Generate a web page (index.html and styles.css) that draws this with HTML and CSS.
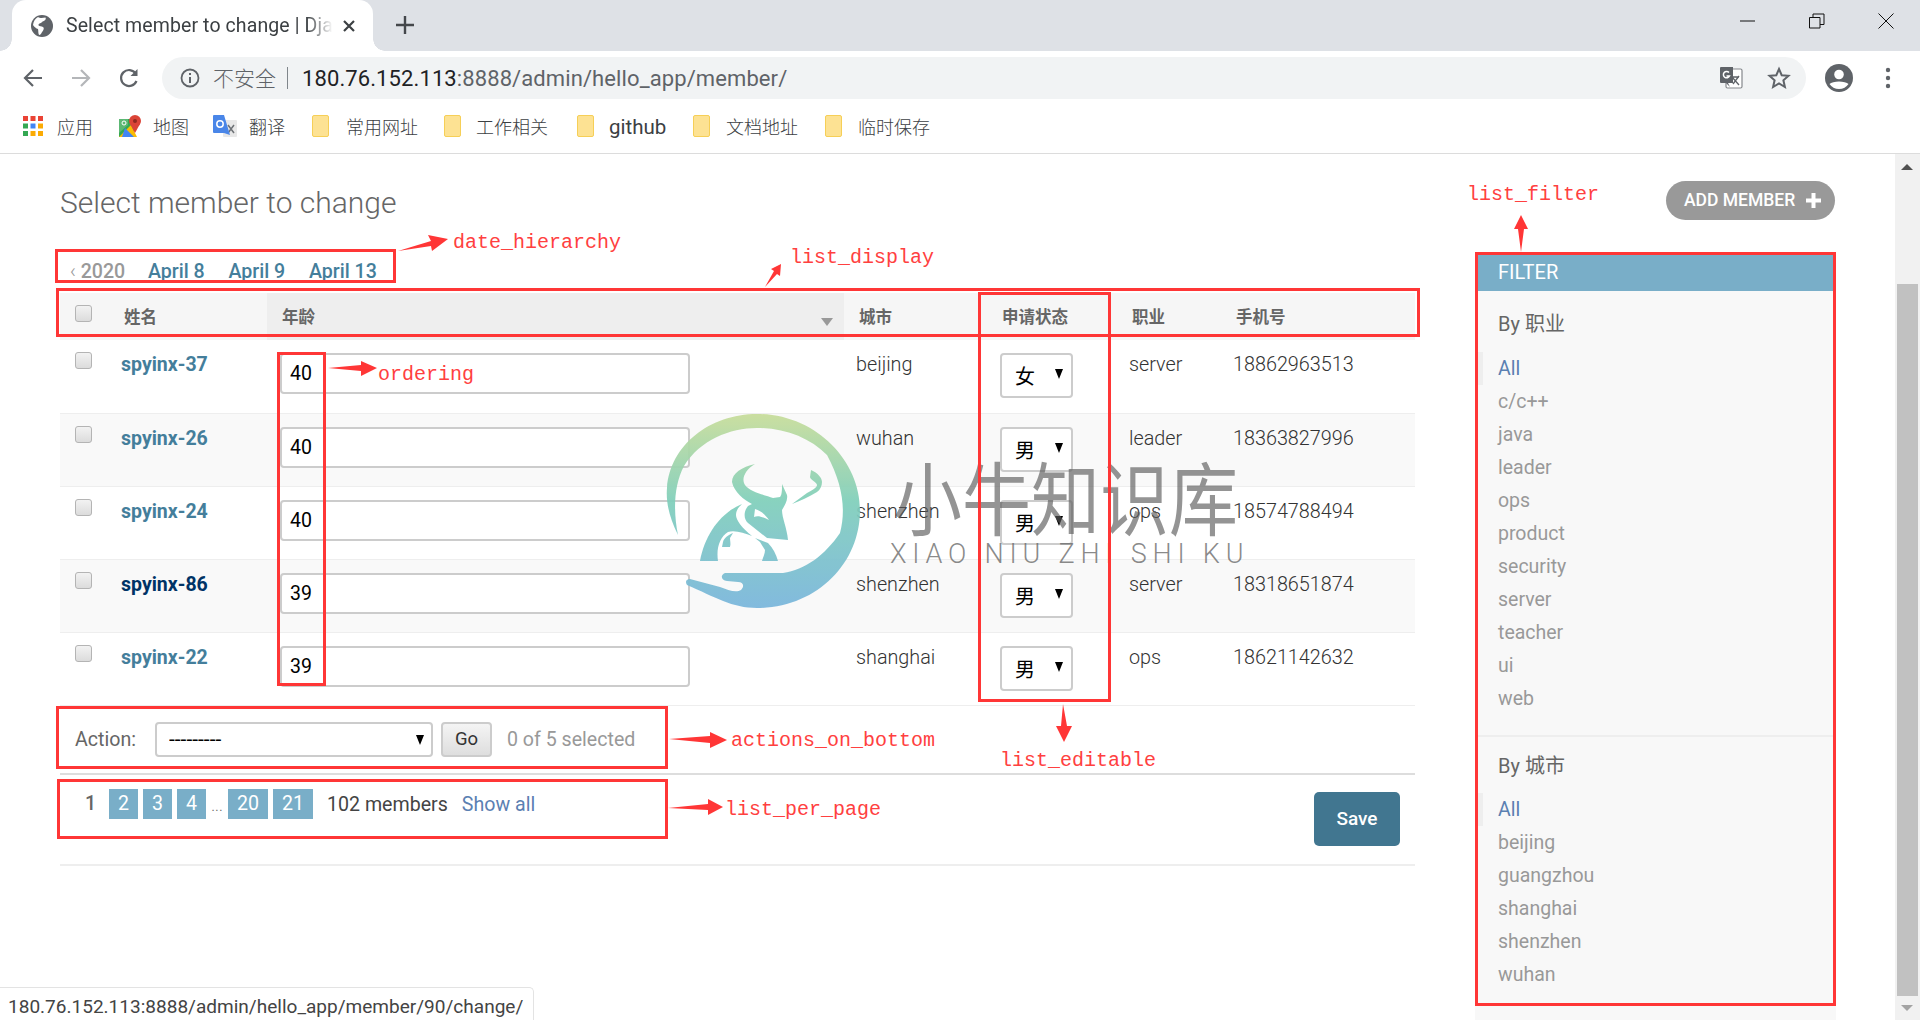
FILE: index.html
```html
<!DOCTYPE html>
<html lang="en">
<head>
<meta charset="utf-8">
<title>Select member to change</title>
<link rel="stylesheet" href="styles.css">
</head>
<body>
<header class="chrome">
  <div class="tabstrip">
    <div class="tab">
      <svg class="tab-icon" width="24" height="24" viewBox="0 0 24 24"><circle cx="12" cy="12" r="11" fill="#5f6368"/><path d="M8 3c2 1.500 5 1 7.500.5 1 2-1 3.500-3 4-1 2-4 1.500-4 3.500 0 1.500 3 1 4.500 2 1.500 1 .5 3.500-1 5-.5 1.500-1.500 3-3 3-1-2-.5-4-1-6-2-.5-3.500-2-5-4 .5-3.500 2-6.500 5-8z" fill="#fff"/></svg>
      <span class="tab-title">Select member to change | Dja</span>
      <svg class="tab-close" width="14" height="14" viewBox="0 0 14 14"><path d="M2 2l10 10M12 2L2 12" stroke="#3c4043" stroke-width="2.200"/></svg>
    </div>
    <svg class="new-tab" width="20" height="20" viewBox="0 0 20 20"><path d="M10 1v18M1 10h18" stroke="#44474b" stroke-width="2.400"/></svg>
    <div class="window-controls">
      <svg width="16" height="16" viewBox="0 0 16 16"><path d="M0 8h15" stroke="#111" stroke-width="1"/></svg>
      <svg width="16" height="16" viewBox="0 0 16 16"><path d="M.5 4.500h10.500v10.500H.5zM4 4.500V1h11v10.500h-4" fill="none" stroke="#111"/></svg>
      <svg width="16" height="16" viewBox="0 0 16 16"><path d="M.5.500l15 15M15.500.500l-15 15" stroke="#111"/></svg>
    </div>
  </div>
  <div class="toolbar">
    <svg class="nav-icon" width="22" height="22" viewBox="0 0 22 22"><path d="M20 11H4M11 3l-8 8 8 8" fill="none" stroke="#5f6368" stroke-width="2.200"/></svg>
    <svg class="nav-icon" width="22" height="22" viewBox="0 0 22 22"><path d="M2 11h16M11 3l8 8-8 8" fill="none" stroke="#b4b6b9" stroke-width="2.200"/></svg>
    <svg class="nav-icon" width="22" height="22" viewBox="0 0 22 22"><path d="M18.500 14a8 8 0 1 1-.8-7.500" fill="none" stroke="#5f6368" stroke-width="2.200"/><path d="M19.500 2v7h-7z" fill="#5f6368"/></svg>
    <div class="omnibox">
      <svg class="info-icon" width="20" height="20" viewBox="0 0 20 20"><circle cx="10" cy="10" r="8.500" fill="none" stroke="#5f6368" stroke-width="1.800"/><path d="M10 9v6M10 5v2" stroke="#5f6368" stroke-width="2"/></svg>
      <span class="insecure">不安全</span>
      <span class="omni-sep"></span>
      <span class="url"><span class="url-host">180.76.152.113</span>:8888/admin/hello_app/member/</span>
      <svg class="translate-icon" width="24" height="24" viewBox="0 0 24 24"><rect x="7" y="3" width="16" height="19" rx="1.500" fill="#fff" stroke="#85888c" stroke-width="1.200"/><path d="M13 11l7 8M20 10l-6 8M12 11h8" stroke="#5f6368" stroke-width="1.300"/><path d="M2 1h12v16H9l2 4-4-4H2a1 1 0 0 1-1-1V2a1 1 0 0 1 1-1z" fill="#5f6368"/><path d="M10 6.500A3.200 3.200 0 1 0 10.500 10H7.500" fill="none" stroke="#fff" stroke-width="1.500"/></svg>
      <svg class="star-icon" width="24" height="24" viewBox="0 0 24 24"><path d="M12 3l2.700 6.200 6.800.6-5.100 4.500 1.500 6.700L12 17.500 6.100 21l1.500-6.700L2.500 9.800l6.800-.6z" fill="none" stroke="#5f6368" stroke-width="2"/></svg>
    </div>
    <svg class="avatar" width="28" height="28" viewBox="0 0 28 28"><circle cx="14" cy="14" r="14" fill="#5f6368"/><circle cx="14" cy="10.500" r="4.800" fill="#fff"/><path d="M4.500 20c3-3.500 16-3.500 19 0-2 3-5.500 5-9.500 5s-7.500-2-9.500-5z" fill="#fff"/></svg>
    <svg class="menu-dots" width="6" height="22" viewBox="0 0 6 22"><circle cx="3" cy="3" r="2.200" fill="#5f6368"/><circle cx="3" cy="11" r="2.200" fill="#5f6368"/><circle cx="3" cy="19" r="2.200" fill="#5f6368"/></svg>
  </div>
  <nav class="bookmarks">
    <a class="bm bm-apps"><svg width="20" height="20" viewBox="0 0 20 20"><path d="M0 0h5v5H0zM7.500 0h5v5h-5zM15 0h5v5h-5z" fill="#ea4335"/><path d="M0 7.500h5v5H0z" fill="#34a853"/><path d="M7.500 7.500h5v5h-5z" fill="#4285f4"/><path d="M15 7.500h5v5h-5zM7.500 15h5v5h-5zM15 15h5v5h-5z" fill="#fbab04"/><path d="M0 15h5v5H0z" fill="#34a853"/></svg>应用</a>
    <a class="bm bm-maps"><svg width="22" height="22" viewBox="0 0 22 22"><path d="M0 4h15v18H0z" fill="#34a853"/><path d="M0 22l12-12 6 12z" fill="#fbbc04"/><path d="M6 13l9 9H3z" fill="#4285f4"/><path d="M0 4h9v6l-9 8z" fill="#5cb874"/><circle cx="16" cy="6" r="6" fill="#db4437"/><path d="M11 9l5 9 5-9z" fill="#db4437"/><circle cx="16" cy="6" r="2" fill="#8f2a20"/><circle cx="5" cy="8" r="2" fill="none" stroke="#fff"/></svg>地图</a>
    <a class="bm bm-trans"><svg width="24" height="22" viewBox="0 0 24 22"><rect x="10" y="5" width="14" height="17" rx="1" fill="#e8e8e8"/><path d="M15 10l6 8M21 10l-6 8" stroke="#6e7276" stroke-width="1.500"/><path d="M1 0h10l6 20-6-2H1a1 1 0 0 1-1-1V1a1 1 0 0 1 1-1z" fill="#4a86e8"/><circle cx="7" cy="9" r="3.200" fill="none" stroke="#fff" stroke-width="1.500"/></svg>翻译</a>
    <a class="bm bm-f1"><span class="folder"></span>常用网址</a>
    <a class="bm bm-f2"><span class="folder"></span>工作相关</a>
    <a class="bm bm-f3"><span class="folder"></span><span class="bm-latin">github</span></a>
    <a class="bm bm-f4"><span class="folder"></span>文档地址</a>
    <a class="bm bm-f5"><span class="folder"></span>临时保存</a>
  </nav>
</header>

<div class="viewport">
  <main class="main">
    <h1 class="page-title">Select member to change</h1>
    <div class="date-hier">
      <a class="back"><span class="laquo">‹</span> 2020</a>
      <a class="date-link">April 8</a>
      <a class="date-link">April 9</a>
      <a class="date-link">April 13</a>
    </div>
    <table class="results">
      <colgroup>
        <col class="c-check"><col class="c-name"><col class="c-age"><col class="c-city"><col class="c-status"><col class="c-job"><col class="c-phone">
      </colgroup>
      <thead>
        <tr>
          <th class="check-cell"><input class="cb" type="checkbox"></th>
          <th>姓名</th>
          <th class="sorted">年龄<span class="sort-caret"></span></th>
          <th>城市</th>
          <th>申请状态</th>
          <th>职业</th>
          <th>手机号</th>
        </tr>
      </thead>
      <tbody>
        <tr>
          <td class="check-cell"><input class="cb" type="checkbox"></td>
          <td><a class="name">spyinx-37</a></td>
          <td><input class="age" type="text" value="40"></td>
          <td>beijing</td>
          <td><span class="sel sel-small"><select><option>女</option></select></span></td>
          <td>server</td>
          <td>18862963513</td>
        </tr>
        <tr>
          <td class="check-cell"><input class="cb" type="checkbox"></td>
          <td><a class="name">spyinx-26</a></td>
          <td><input class="age" type="text" value="40"></td>
          <td>wuhan</td>
          <td><span class="sel sel-small"><select><option>男</option></select></span></td>
          <td>leader</td>
          <td>18363827996</td>
        </tr>
        <tr>
          <td class="check-cell"><input class="cb" type="checkbox"></td>
          <td><a class="name">spyinx-24</a></td>
          <td><input class="age" type="text" value="40"></td>
          <td>shenzhen</td>
          <td><span class="sel sel-small"><select><option>男</option></select></span></td>
          <td>ops</td>
          <td>18574788494</td>
        </tr>
        <tr>
          <td class="check-cell"><input class="cb" type="checkbox"></td>
          <td><a class="name name-hover">spyinx-86</a></td>
          <td><input class="age" type="text" value="39"></td>
          <td>shenzhen</td>
          <td><span class="sel sel-small"><select><option>男</option></select></span></td>
          <td>server</td>
          <td>18318651874</td>
        </tr>
        <tr>
          <td class="check-cell"><input class="cb" type="checkbox"></td>
          <td><a class="name">spyinx-22</a></td>
          <td><input class="age" type="text" value="39"></td>
          <td>shanghai</td>
          <td><span class="sel sel-small"><select><option>男</option></select></span></td>
          <td>ops</td>
          <td>18621142632</td>
        </tr>
      </tbody>
    </table>
    <div class="actions">
      <span class="action-label">Action:</span>
      <span class="sel sel-action"><select><option>---------</option></select></span>
      <button class="go" type="button">Go</button>
      <span class="counter">0 of 5 selected</span>
    </div>
    <div class="paginator">
      <span class="this-page">1</span>
      <a class="page">2</a>
      <a class="page">3</a>
      <a class="page">4</a>
      <span class="dots">...</span>
      <a class="page page-wide">20</a>
      <a class="page page-wide">21</a>
      <span class="count">102 members</span>
      <a class="show-all">Show all</a>
      <button class="save" type="button">Save</button>
    </div>
  </main>

  <aside class="side">
    <a class="add-btn">ADD MEMBER<svg width="15" height="15" viewBox="0 0 15 15"><path d="M7.500 0v15M0 7.500h15" stroke="#fff" stroke-width="4"/></svg></a>
    <div class="filter">
      <h2 class="filter-head">FILTER</h2>
      <section class="filter-group">
        <h3>By 职业</h3>
        <ul>
          <li class="selected">All</li><li>c/c++</li><li>java</li><li>leader</li><li>ops</li><li>product</li><li>security</li><li>server</li><li>teacher</li><li>ui</li><li>web</li>
        </ul>
      </section>
      <section class="filter-group">
        <h3>By 城市</h3>
        <ul>
          <li class="selected">All</li><li>beijing</li><li>guangzhou</li><li>shanghai</li><li>shenzhen</li><li>wuhan</li>
        </ul>
      </section>
    </div>
  </aside>

  <div class="scrollbar">
    <span class="sb-up"></span>
    <span class="sb-thumb"></span>
    <span class="sb-down"></span>
  </div>
</div>

<div class="watermark">
  <svg class="wm-logo" width="205" height="205" viewBox="0 0 205 205">
    <defs>
      <linearGradient id="wmg" gradientUnits="userSpaceOnUse" x1="0" y1="4" x2="0" y2="198">
        <stop offset="0" stop-color="#c8dd9a"/>
        <stop offset=".45" stop-color="#80cfbb"/>
        <stop offset="1" stop-color="#7ab6dc"/>
      </linearGradient>
    </defs>
    <path fill="url(#wmg)" d="M18 125C8 105 6 90 7 78 10 35 50 4 97 4c58 0 103 46 103 96 0 55-45 98-103 98-25 0-42-11-70-23-2-3-1-6 3-6l30 8c8 3 16 6 21 3 4-4 2-8-3-8l-11-1c-6-1-7-6-2-8h58c22-3 42-18 57-40 6-23 3-48-13-78C150 28 125 18 97 18 70 18 40 30 24 56 14 75 13 100 18 125z"/>
    <path fill="url(#wmg)" d="M95 54C82 57 72 63 72 72c2 10 12 18 20 22l-4 2c-5 6-4 14 0 17l19 15 21 2c-1-12-6-22-6-30 3-5 6-10 5-15l-5-11c0 6 0 11-2 13l-7 1c-8-3-23-6-28-13-4-6 0-15 10-21z"/>
    <path class="wm-notch" d="M95 99c7 2 11 7 14 11-6-3-11-5-15-3z"/>
    <path fill="url(#wmg)" d="M82 94C60 103 45 125 40 151h18c-2-13 2-24 10-29 7-2 16 1 24 4-10-8-16-16-16-21 0-5 3-8 6-11z"/>
    <path fill="url(#wmg)" d="M95 128l13 5c5 5 8 11 10 18h-16c1-4 3-7 3-11l-5-8z"/>
    <path fill="url(#wmg)" d="M73 123c-5 2-9 5-10 9l-1 5h8c1-3 0-6 0-9z"/>
    <path fill="url(#wmg)" d="M151 60c7 3 11 8 11 12 0 4-2 8-5 10-8 5-17 9-25 12 5-4 10-7 15-11 5-3 10-5 10-8 0-3-7-5-7-8z"/>
  </svg>
  <span class="wm-cn">小牛知识库</span>
  <span class="wm-en">XIAO NIU ZHI SHI KU</span>
</div>

<div class="annotations">
  <div class="box box-date"></div>
  <div class="box box-display"></div>
  <div class="box box-ordering"></div>
  <div class="box box-editable"></div>
  <div class="box box-actions"></div>
  <div class="box box-perpage"></div>
  <div class="box box-filter"></div>
  <span class="note note-date">date_hierarchy</span>
  <span class="note note-display">list_display</span>
  <span class="note note-ordering">ordering</span>
  <span class="note note-filter">list_filter</span>
  <span class="note note-actions">actions_on_bottom</span>
  <span class="note note-editable">list_editable</span>
  <span class="note note-perpage">list_per_page</span>
  <svg class="arrows" width="1920" height="1020" viewBox="0 0 1920 1020">
    <g fill="#ff3636">
      <polygon points="398,251 431,241 428,235 448,239 432,251 431,246"/>
      <polygon points="765,287 774,271 771,269 781,264 780,276 777,274"/>
      <polygon points="328,368 361,365 361,361 377,368 361,376 361,371"/>
      <polygon points="1521,252 1518,229 1514,229 1521,215 1528,229 1524,229"/>
      <polygon points="669,739 710,736 710,732 727,740 710,748 710,743"/>
      <polygon points="668,808 708,804 708,799 723,807 708,815 708,810"/>
      <polygon points="1063,704 1061,726 1056,726 1064,742 1072,726 1067,726"/>
    </g>
  </svg>
</div>

<div class="status-bubble">180.76.152.113:8888/admin/hello_app/member/90/change/</div>
</body>
</html>
```

FILE: styles.css
```css
* { box-sizing: border-box; }
html, body { margin: 0; padding: 0; }
body {
  width: 1920px;
  height: 1020px;
  overflow: hidden;
  position: relative;
  background: #fff;
  font-family: Roboto, "Noto Sans CJK SC", sans-serif;
  font-size: 19.600px;
  font-weight: 300;
  color: #333;
}
a { text-decoration: none; }
ul { list-style: none; margin: 0; padding: 0; }
h1, h2, h3 { margin: 0; }

/* browser chrome */
.chrome { height: 154px; border-bottom: 1px solid #dcdcdc; font-weight: 400; }
.tabstrip { height: 51px; background: #dee1e6; display: flex; align-items: flex-start; padding-left: 12px; position: relative; }
.tab {
  width: 361px; height: 51px; background: #fff; border-radius: 14px 14px 0 0;
  display: flex; align-items: center; padding-left: 18px; position: relative;
}
.tab::before, .tab::after { content: ""; position: absolute; bottom: 0; width: 12px; height: 12px; }
.tab::before { left: -12px; background: radial-gradient(circle at 0 0, #dee1e6 11.500px, #fff 12px); }
.tab::after { right: -12px; background: radial-gradient(circle at 100% 0, #dee1e6 11.500px, #fff 12px); }
.tab-title {
  margin-left: 12px; width: 267px; white-space: nowrap; font-size: 19.500px; color: #3c4043;
  font-family: Roboto, sans-serif; letter-spacing: .1px;
  -webkit-mask-image: linear-gradient(to right, #000 90%, transparent);
  mask-image: linear-gradient(to right, #000 90%, transparent);
}
.tab-close { margin-left: 9px; }
.new-tab { margin: 15px 0 0 22px; }
.window-controls { margin-left: auto; display: flex; gap: 53px; padding: 13px 26px 0 0; }
.toolbar { height: 53px; background: #fff; display: flex; align-items: center; padding-left: 22px; padding-top: 1px; }
.nav-icon { margin-right: 26px; }
.omnibox {
  width: 1644px; height: 42px; margin-left: -4px; background: #f1f3f4; border-radius: 21px;
  display: flex; align-items: center; padding-left: 18px; font-size: 20.500px; color: #5f6368;
}
.insecure { margin-left: 13px; padding-bottom: 2px; font-family: "Noto Sans CJK SC", sans-serif; font-size: 21px; font-weight: 300; }
.omni-sep { width: 1px; height: 22px; background: #80868b; margin: 0 14px 0 11px; }
.url { font-size: 22px; letter-spacing: .1px; }
.url-host { color: #202124; }
.translate-icon { margin-left: auto; margin-right: 24px; }
.star-icon { margin-right: 15px; }
.avatar { margin-left: 19px; }
.menu-dots { margin-left: 32px; }
.bookmarks { height: 49px; display: block; position: relative; font-size: 18px; color: #3c4043; }
.bm { position: absolute; top: 0; height: 44px; display: flex; align-items: center; gap: 12px; white-space: nowrap; font-family: "Noto Sans CJK SC", sans-serif; font-weight: 300; }
.bm-apps { left: 23px; gap: 14px; }
.bm-maps { left: 119px; gap: 12px; }
.bm-trans { left: 213px; gap: 12px; }
.bm-f1 { left: 312px; gap: 17px; }
.bm-f2 { left: 444px; gap: 15px; }
.bm-f3 { left: 577px; gap: 15px; }
.bm-latin { font-family: Roboto, sans-serif; font-size: 20.500px; font-weight: 400; padding-top: 2px; }
.bm-f4 { left: 693px; gap: 16px; }
.bm-f5 { left: 825px; gap: 16px; }
.folder { width: 17px; height: 22px; background: #fde293; border: 1.500px solid #f6cf57; border-radius: 2px; display: block; }

/* page */
.viewport { display: flex; height: 866px; padding-left: 60px; overflow: hidden; }
.main { width: 1355px; flex: none; }
.page-title { font-size: 30px; font-weight: 300; color: #666; line-height: 34px; margin-top: 32px; white-space: nowrap; }
.date-hier { height: 73px; padding-top: 40px; display: flex; font-size: 19.600px; font-weight: 500; line-height: 24px; }
.back { color: #999; width: 88px; padding-left: 10px; }
.laquo { font-weight: 300; }
.date-link { color: #447e9b; width: 80.500px; }

.results { width: 1355px; table-layout: fixed; border-collapse: collapse; }
.c-check { width: 48px; } .c-name { width: 159px; } .c-age { width: 577px; } .c-city { width: 143px; }
.c-status { width: 130px; } .c-job { width: 103px; } .c-phone { width: 195px; }
.results th {
  height: 47px; background: #f6f6f6; text-align: left; padding: 10px 0 0 15px; color: #666;
  font-size: 16.500px; font-weight: 700; font-family: "Noto Sans CJK SC", sans-serif; vertical-align: top; line-height: 26px; position: relative;
}
.results th:nth-child(2), .results th:nth-child(7) { padding-left: 16px; }
.results th.sorted { background: #eee; }
.sort-caret { position: absolute; right: 11px; top: 25px; border: 6px solid transparent; border-top: 8px solid #999; border-bottom: 0; }
.results td { height: 73px; padding: 13px 0 0 12px; vertical-align: top; line-height: 24px; border-bottom: 1px solid #eee; white-space: nowrap; font-size: 19.800px; }
.results td:nth-child(2), .results td:nth-child(3), .results td:nth-child(5), .results td:nth-child(7) { padding-left: 13px; }
.results tbody tr:nth-child(even) td { background: #f9f9f9; }
.results th.check-cell { padding: 12px 0 0 15px; }
.results td.check-cell { padding: 12px 0 0 15px; }
.cb {
  appearance: none; display: block; width: 17px; height: 17px; margin: 0; border: 1px solid #b4b4b4; border-radius: 3px;
  background: linear-gradient(#f2f2f2, #dcdcdc);
}
.name { font-weight: 700; font-size: 19.500px; color: #447e9b; }
.name-hover { color: #036; }
.age {
  display: block; width: 410px; height: 41px; border: 2px solid #ccc; border-radius: 4px; padding: 0 8px; background: #fff;
  font: 400 19.500px Roboto, sans-serif; color: #000;
}
.sel { position: relative; display: block; }
.sel select {
  appearance: none; display: block; width: 100%; height: 100%; border: 2px solid #ccc; border-radius: 4px; background: #fff; color: #000;
  font: 400 20px "Noto Sans CJK SC", Roboto, sans-serif; padding: 0 0 0 13px;
}
.sel::after { content: ""; position: absolute; border: 4.500px solid transparent; border-top: 10px solid #000; border-bottom: 0; pointer-events: none; }
.sel-small { width: 73px; height: 45px; }
.sel-small::after { right: 10px; top: 16px; }
.sel-action { width: 278px; height: 35px; }
.sel-action select { font: 400 21px Roboto, sans-serif; padding-left: 12px; }
.sel-action::after { right: 9px; top: 13px; }

.actions { height: 69px; border-bottom: 2px solid #ddd; display: flex; align-items: center; padding-left: 15px; }
.action-label { width: 80px; color: #666; font-weight: 400; }
.go {
  margin-left: 8px; width: 51px; height: 35px; border: 2px solid #ccc; border-radius: 4px; padding: 0;
  background: linear-gradient(#f4f4f4, #dedede); font: 400 18.500px Roboto, sans-serif; color: #333;
}
.counter { margin-left: 15px; color: #999; font-weight: 400; white-space: nowrap; }

.paginator { height: 91px; border-bottom: 2px solid #eee; display: flex; align-items: flex-start; gap: 5px; padding: 14px 0 0 25px; }
.this-page { width: 19px; line-height: 30px; font-weight: 500; color: #666; }
.page { width: 29px; height: 30px; line-height: 30px; text-align: center; background: #79aec8; color: #fff; font-weight: 400; }
.page-wide { width: 40px; }
.dots { width: 12px; line-height: 33px; color: #666; font-size: 16px; text-align: center; }
.count { margin-left: 9px; line-height: 32px; white-space: nowrap; color: #444; font-weight: 400; }
.show-all { margin-left: 9px; line-height: 32px; color: #5b80b2; font-weight: 400; white-space: nowrap; }
.save {
  margin: 3px 15px 0 auto; width: 86px; height: 54px; border: 0; border-radius: 5px; background: #417690; color: #fff;
  font: 500 19px Roboto, sans-serif; padding: 0;
}

.side { width: 361px; margin-left: 60px; flex: none; display: flex; flex-direction: column; align-items: stretch; }
.add-btn {
  align-self: flex-end; margin: 27px 1px 0 0; width: 169px; height: 39px; border-radius: 20px; background: #999; color: #fff;
  display: flex; align-items: center; gap: 11px; padding: 0 0 1px 18px; font-size: 17.500px; font-weight: 500; white-space: nowrap;
}
.filter { margin-top: 32px; flex: 1; background: #f8f8f8; }
.filter-head { height: 39px; background: #79aec8; color: #fff; font-size: 20px; font-weight: 400; line-height: 40px; padding-left: 23px; }
.filter-group { padding: 15px 0 20px; }
.filter-group:first-of-type { padding-top: 19px; border-bottom: 2px solid #eee; }
.filter-group h3 { font-size: 20px; font-weight: 400; line-height: 28px; color: #666; padding-left: 23px; margin-bottom: 14px; font-family: Roboto, "Noto Sans CJK SC", sans-serif; }
.filter-group + .filter-group h3 { margin-bottom: 13px; }
.filter-group li { height: 33px; line-height: 33px; padding-left: 23px; color: #999; font-weight: 400; font-size: 19.500px; }
.filter-group li.selected { color: #5b80b2; border-left: 8px solid #eee; padding-left: 15px; }

.scrollbar { width: 25px; margin-left: 59px; flex: none; background: #f1f1f1; position: relative; display: flex; flex-direction: column; align-items: center; }
.sb-up { margin-top: 10px; border: 6px solid transparent; border-bottom: 6px solid #505050; border-top: 0; margin-left: -1px; }
.sb-thumb { margin-top: 114px; width: 21px; height: 712px; background: #c1c1c1; }
.sb-down { margin-top: 9px; border: 6px solid transparent; border-top: 6px solid #a3a3a3; border-bottom: 0; margin-left: -1px; }

/* watermark */
.watermark { position: absolute; left: 0; top: 0; width: 1920px; height: 1020px; pointer-events: none; }
.wm-logo { position: absolute; left: 660px; top: 410px; opacity: .93; }
.wm-notch { fill: #fff; }
.wm-cn { position: absolute; left: 893px; top: 447px; font: 400 69px/96px "Noto Sans CJK SC", sans-serif; color: rgba(90,90,90,.65); white-space: nowrap; transform: scaleY(1.15); }
.wm-en { position: absolute; left: 890px; top: 537px; font: 300 27px/34px Roboto, sans-serif; letter-spacing: 5.800px; color: rgba(100,100,100,.75); white-space: nowrap; }

/* annotations */
.annotations { position: absolute; left: 0; top: 0; width: 1920px; height: 1020px; pointer-events: none; }
.arrows { position: absolute; left: 0; top: 0; }
.box { position: absolute; border: 3px solid #ff3636; }
.box-date { left: 55px; top: 249px; width: 341px; height: 34px; }
.box-display { left: 56px; top: 288px; width: 1364px; height: 49px; }
.box-ordering { left: 277px; top: 352px; width: 49px; height: 334px; }
.box-editable { left: 978px; top: 292px; width: 133px; height: 410px; }
.box-actions { left: 56px; top: 706px; width: 612px; height: 63px; }
.box-perpage { left: 57px; top: 779px; width: 611px; height: 60px; }
.box-filter { left: 1475px; top: 252px; width: 361px; height: 754px; }
.note { position: absolute; font: 400 20px/24px "Liberation Mono", monospace; color: #ff4040; white-space: nowrap; }
.note-date { left: 453px; top: 231px; }
.note-display { left: 790px; top: 246px; }
.note-ordering { left: 378px; top: 363px; }
.note-filter { left: 1467px; top: 183px; }
.note-actions { left: 731px; top: 729px; }
.note-editable { left: 1000px; top: 749px; }
.note-perpage { left: 725px; top: 798px; }

.status-bubble {
  position: absolute; left: 0; bottom: 0; width: 534px; height: 33px; background: #fff;
  border-top: 1px solid #e3e3e3; border-right: 1px solid #e3e3e3; border-top-right-radius: 5px;
  padding: 2px 0 0 8px; line-height: 33px; font-size: 19.050px; font-weight: 400; color: #444; white-space: nowrap;
}
```
